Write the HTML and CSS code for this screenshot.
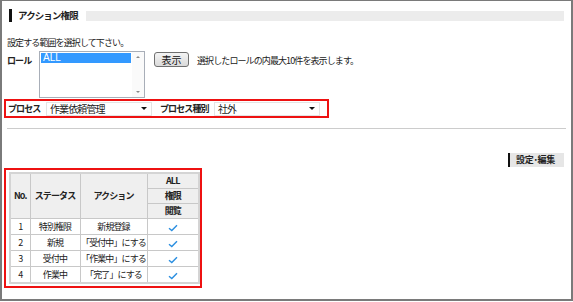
FILE: index.html
```html
<!DOCTYPE html>
<html>
<head>
    <title>アクション権限</title>
    <link rel="stylesheet" href="styles.css">
</head>
<body>
    <div class="frame">
        <!-- Title -->
        <div class="title">
            <span class="title-text">アクション権限</span>
            <span class="title-fill"></span>
        </div>

        <p class="note">設定する範囲を選択して下さい。</p>

        <!-- Role select -->
        <div class="role-row">
            <span class="label">ロール</span>
            <div class="listbox">
                <div class="list-items">
                    <div class="list-item selected">ALL</div>
                </div>
                <div class="list-scroll">
                    <span class="arrow-up"></span>
                    <span class="arrow-down"></span>
                </div>
            </div>
            <button class="btn">表示</button>
            <span class="hint">選択したロールの内最大10件を表示します。</span>
        </div>

        <!-- Process filter -->
        <div class="process-box">
            <span class="label">プロセス</span>
            <div class="dropdown"><span>作業依頼管理</span><span class="caret"></span></div>
            <span class="label label-gap">プロセス種別</span>
            <div class="dropdown"><span>社外</span><span class="caret"></span></div>
        </div>

        <hr class="rule">

        <div class="actions">
            <span class="edit-btn">設定･編集</span>
        </div>

        <!-- Permission table -->
        <div class="table-box">
            <table class="perm">
                <colgroup>
                    <col class="c-no"><col class="c-status"><col class="c-action"><col class="c-role">
                </colgroup>
                <tr>
                    <th rowspan="3">No.</th>
                    <th rowspan="3">ステータス</th>
                    <th rowspan="3">アクション</th>
                    <th>ALL</th>
                </tr>
                <tr><th>権限</th></tr>
                <tr><th>閲覧</th></tr>
                <tr><td>1</td><td>特別権限</td><td>新規登録</td><td><svg class="chk" viewBox="0 0 10 8"><path d="M1 4.2 L3.8 6.6 L9 1.2"/></svg></td></tr>
                <tr><td>2</td><td>新規</td><td>「受付中」にする</td><td><svg class="chk" viewBox="0 0 10 8"><path d="M1 4.2 L3.8 6.6 L9 1.2"/></svg></td></tr>
                <tr><td>3</td><td>受付中</td><td>「作業中」にする</td><td><svg class="chk" viewBox="0 0 10 8"><path d="M1 4.2 L3.8 6.6 L9 1.2"/></svg></td></tr>
                <tr><td>4</td><td>作業中</td><td>「完了」にする</td><td><svg class="chk" viewBox="0 0 10 8"><path d="M1 4.2 L3.8 6.6 L9 1.2"/></svg></td></tr>
            </table>
        </div>
    </div>
</body>
</html>
```

FILE: styles.css
```css
html, body { margin: 0; padding: 0; background: #fff; }
body { font-family: "Noto Sans CJK JP", "Liberation Sans", sans-serif; font-size: 9px; letter-spacing: -0.9px; color: #222; }

.frame { box-sizing: border-box; width: 573px; height: 301px; border: 2px solid #7a7a7a; border-top-width: 1px; padding: 0 0 0 1px; white-space: nowrap; overflow: hidden; }

.title { display: flex; align-items: center; margin: 8px 7px 0 6px; height: 13px; }
.title-text { border-left: 3px solid #111; padding: 0 8px 0 6px; height: 13px; line-height: 13px; font-weight: bold; font-size: 9.5px; }
.title-fill { flex: 1; height: 10px; background: #ececec; }

.note { margin: 14px 0 0 4px; line-height: 14px; }

.role-row { display: flex; align-items: flex-start; margin: 1px 0 0 4px; }
.label { font-weight: bold; line-height: 14px; }
.role-row .label { margin-top: 3px; width: 32px; }

.listbox { display: flex; width: 106px; height: 47px; border: 1px solid #a8aeb8; box-sizing: border-box; }
.list-items { flex: 1; padding: 1px; }
.list-item { height: 10px; line-height: 10px; padding-left: 2px; font-family: "Liberation Sans", sans-serif; font-size: 10px; letter-spacing: 0; }
.list-item.selected { background: #3399ff; color: #fff; }
.list-scroll { width: 12px; display: flex; flex-direction: column; justify-content: space-between; align-items: center; padding: 4px 0; background: #fafafa; }
.arrow-up { width: 0; height: 0; border-left: 2px solid transparent; border-right: 2px solid transparent; border-bottom: 2px solid #888; }
.arrow-down { width: 0; height: 0; border-left: 2px solid transparent; border-right: 2px solid transparent; border-top: 2px solid #888; }

.btn { margin: 1px 0 0 9px; height: 15px; width: 35px; padding: 0; font: inherit; font-size: 10px; letter-spacing: 0; line-height: 12px; border: 1px solid #707070; border-radius: 3px; background: linear-gradient(#f4f4f4, #dadada); color: #111; }
.hint { margin: 3px 0 0 8px; line-height: 14px; }

.process-box { display: flex; align-items: center; width: 325px; height: 19px; box-sizing: border-box; margin: 1px 0 0 1px; border: 2px solid #ee1111; padding: 0 2px; }
.process-box .label { width: 38px; }
.process-box .label-gap { width: 54px; margin-left: 8px; }
.dropdown { display: flex; justify-content: space-between; align-items: center; width: 106px; height: 14px; box-sizing: border-box; border: 1px solid #e4e4e4; padding: 0 4px 0 3px; font-size: 10px; }
.caret { width: 0; height: 0; border-left: 3px solid transparent; border-right: 3px solid transparent; border-top: 3px solid #111; }

.rule { margin: 10px 5px 0 4px; border: 0; border-top: 1px solid #cccccc; height: 0; }

.actions { display: flex; justify-content: flex-end; margin: 24px 7px 0 0; }
.edit-btn { height: 14px; line-height: 14px; padding: 0 9px 0 6px; border-left: 2px solid #111; background: #e6e6e6; font-weight: bold; letter-spacing: -0.3px; }

.table-box { width: 198px; box-sizing: border-box; margin: 1px 0 0 1px; border: 2px solid #ee1111; padding: 2px 0 2px 3px; }
.perm { border-collapse: collapse; table-layout: fixed; width: 189px; border: 2px solid #d4d4d4; }
.perm th, .perm td { border: 1px solid #c8c8c8; text-align: center; padding: 0; overflow: hidden; }
.perm th { background: #efefef; font-weight: bold; height: 14px; line-height: 14px; }
.perm td { height: 15px; line-height: 15px; }
.c-no { width: 20px; }
.c-status { width: 50px; }
.c-action { width: 67px; }
.c-role { width: 52px; }
.chk { width: 10px; height: 8px; vertical-align: middle; fill: none; stroke: #2a8ee0; stroke-width: 1.4; }
```
